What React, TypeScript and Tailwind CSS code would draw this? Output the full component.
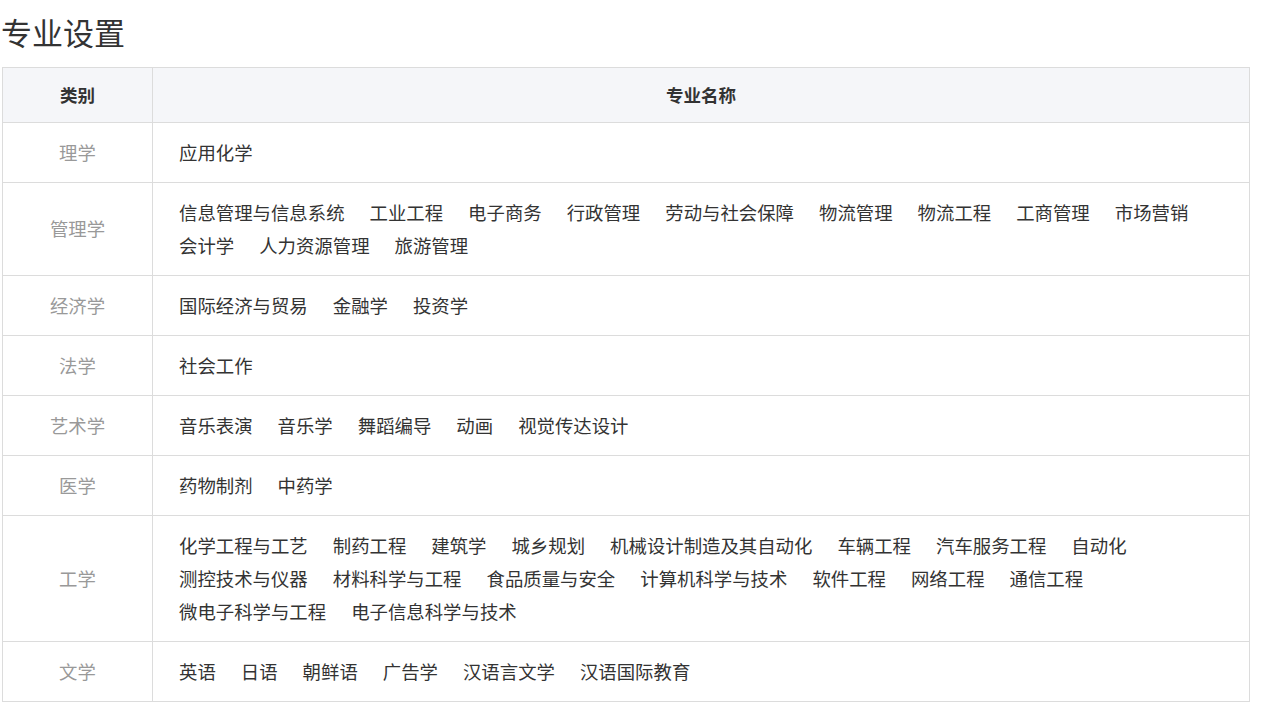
const rows: { category: string; majors: string[] }[] = [
  { category: "理学", majors: ["应用化学"] },
  {
    category: "管理学",
    majors: ["信息管理与信息系统", "工业工程", "电子商务", "行政管理", "劳动与社会保障", "物流管理", "物流工程", "工商管理", "市场营销", "会计学", "人力资源管理", "旅游管理"],
  },
  { category: "经济学", majors: ["国际经济与贸易", "金融学", "投资学"] },
  { category: "法学", majors: ["社会工作"] },
  { category: "艺术学", majors: ["音乐表演", "音乐学", "舞蹈编导", "动画", "视觉传达设计"] },
  { category: "医学", majors: ["药物制剂", "中药学"] },
  {
    category: "工学",
    majors: [
      "化学工程与工艺", "制药工程", "建筑学", "城乡规划", "机械设计制造及其自动化", "车辆工程", "汽车服务工程", "自动化",
      "测控技术与仪器", "材料科学与工程", "食品质量与安全", "计算机科学与技术", "软件工程", "网络工程", "通信工程",
      "微电子科学与工程", "电子信息科学与技术",
    ],
  },
  { category: "文学", majors: ["英语", "日语", "朝鲜语", "广告学", "汉语言文学", "汉语国际教育"] },
];

export default function App() {
  return (
    <div className="min-h-screen bg-white px-[2px] font-['Microsoft_YaHei','Noto_Sans_CJK_SC',sans-serif] text-[#333]">
      <h1 className="-ml-px pt-[12px] pb-[15px] text-[31px] leading-[40px] font-normal text-[#333]">专业设置</h1>
      <table className="w-[1248px] table-fixed border-collapse border border-[#dcdcdc]">
        <thead>
          <tr className="h-[55px] bg-[#f5f6f9]">
            <th className="w-[150px] border border-[#dcdcdc] text-[17.5px] font-bold text-[#333]">类别</th>
            <th className="border border-[#dcdcdc] text-[17.5px] font-bold text-[#333]">专业名称</th>
          </tr>
        </thead>
        <tbody>
          {rows.map((row) => (
            <tr key={row.category}>
              <td className="border border-[#dcdcdc] text-center text-[18.4px] text-[#999]">{row.category}</td>
              <td className="border border-[#dcdcdc] px-[26px] py-[13px]">
                <div className="flex flex-wrap gap-x-[25px] text-[18.4px] leading-[33px] text-[#333]">
                  {row.majors.map((m) => (
                    <span key={m}>{m}</span>
                  ))}
                </div>
              </td>
            </tr>
          ))}
        </tbody>
      </table>
    </div>
  );
}
